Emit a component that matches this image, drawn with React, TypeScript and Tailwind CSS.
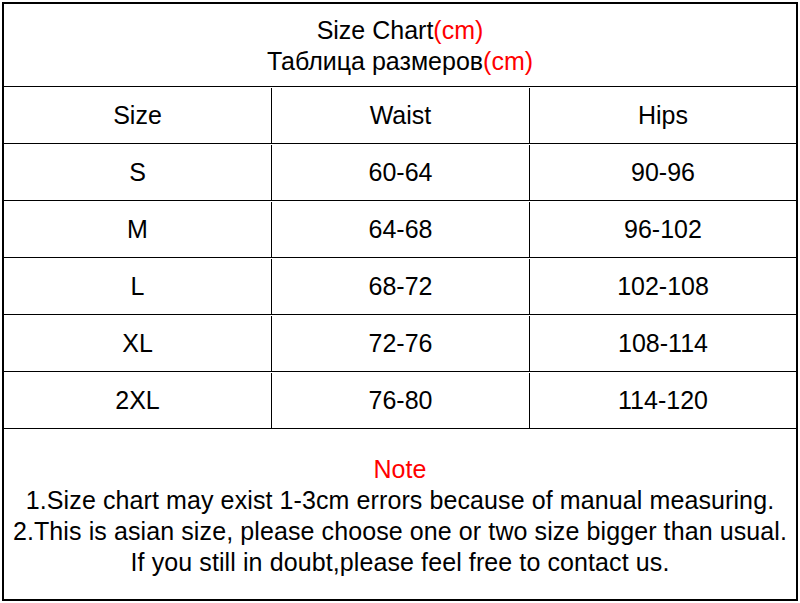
import React from "react";

const rows = [
  ["Size", "Waist", "Hips"],
  ["S", "60-64", "90-96"],
  ["M", "64-68", "96-102"],
  ["L", "68-72", "102-108"],
  ["XL", "72-76", "108-114"],
  ["2XL", "76-80", "114-120"],
];

export default function App() {
  return (
    <div className="w-[800px] h-[603px] bg-white p-[2px] text-black" style={{ fontFamily: '"Liberation Sans", Arial, sans-serif' }}>
      <div className="w-[796px] h-[599px] border-2 border-black flex flex-col">
        <div className="h-[83px] border-b border-black flex flex-col items-center justify-center text-[25px] leading-[31px] pt-[1px]">
          <div>Size Chart<span className="text-[#ff0000]">(cm)</span></div>
          <div>Таблица размеров<span className="text-[#ff0000]">(cm)</span></div>
        </div>
        {rows.map((r, i) => (
          <div key={i} className="h-[57px] border-b border-black flex text-[25px] pt-[1px]">
            <div className="w-[268px] border-r border-black flex items-center justify-center">{r[0]}</div>
            <div className="w-[258px] border-r border-black flex items-center justify-center">{r[1]}</div>
            <div className="flex-1 flex items-center justify-center">{r[2]}</div>
          </div>
        ))}
        <div className="flex-1 flex flex-col items-center justify-center text-[25px] leading-[31px] tracking-[0.1px] pt-[3px]">
          <div className="text-[#ff0000]">Note</div>
          <div>1.Size chart may exist 1-3cm errors because of manual measuring.</div>
          <div>2.This is asian size, please choose one or two size bigger than usual.</div>
          <div>If you still in doubt,please feel free to contact us.</div>
        </div>
      </div>
    </div>
  );
}
